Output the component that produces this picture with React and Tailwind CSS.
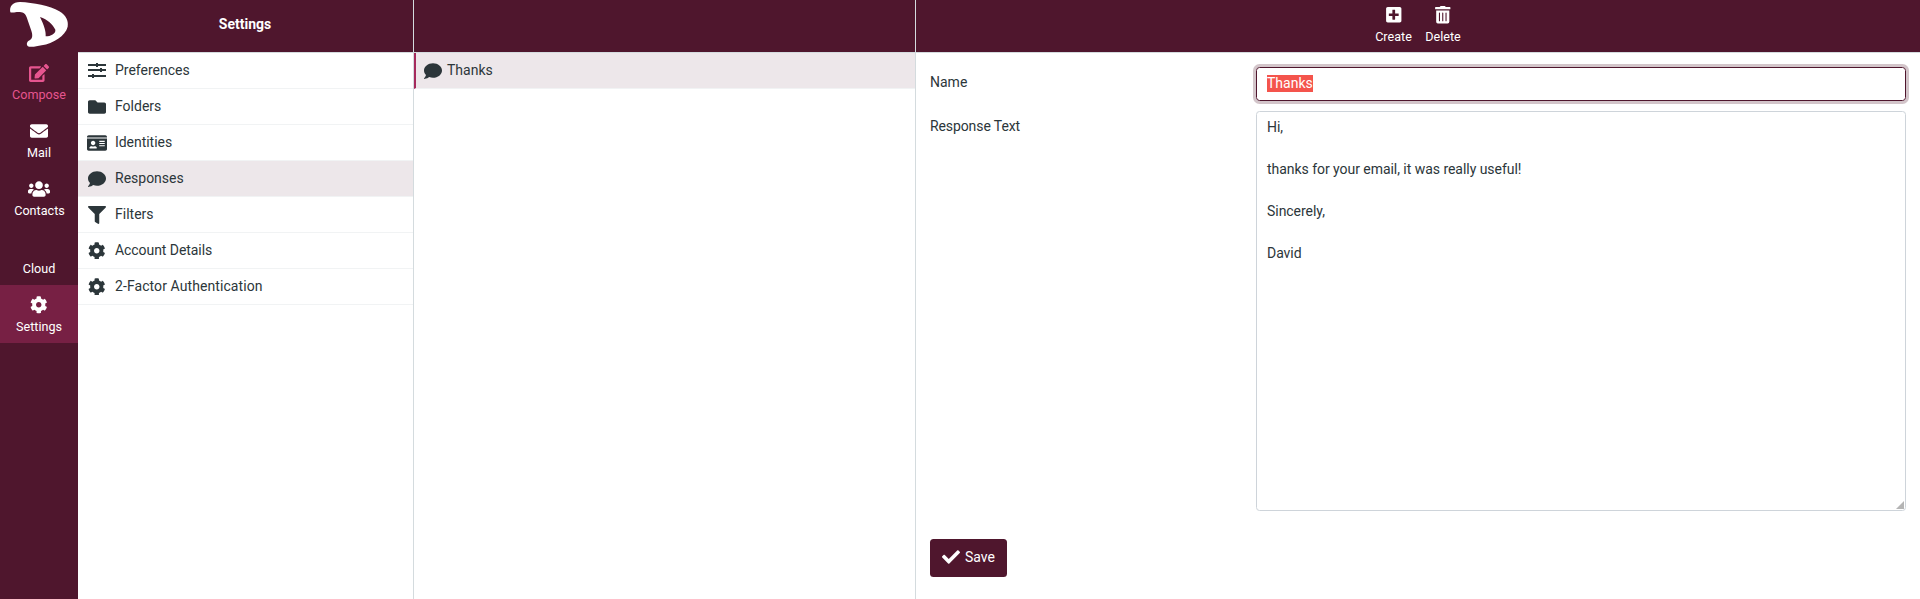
import { FaEdit, FaEnvelope, FaUsers, FaCog, FaFolder, FaIdCard, FaComment, FaFilter, FaPlusSquare, FaTrashAlt, FaCheck } from 'react-icons/fa';

function Logo() {
  return (
    <svg viewBox="0 0 234 156" className="h-[52px] w-[78px] shrink-0" fill="#fff" fillRule="evenodd">
      <path d="M31 37C27 20 38 6 60 6C100 8 150 16 178 34C198 46 206 62 203 80C196 108 160 130 125 136C108 140 90 143 83 138C78 131 81 124 91 119C98 114 98 104 94 92L80 52C76 37 64 35 50 36C42 37 36 39 31 37ZM120 51C143 58 158 73 166 89C168 101 152 109 137 109C138 94 133 78 120 51Z" />
    </svg>
  );
}

function Sliders({ className }) {
  return (
    <svg viewBox="0 0 18 18" className={className} fill="currentColor">
      <path d="M0 2h8V1h2v1h8v2h-8v1H8V4H0zM0 7h12V6h2v1h4v2h-4v1h-2V9H0zM0 13h4v-1h2v1h12v2H6v1H4v-1H0z" />
    </svg>
  );
}

const tasks = [
  { label: 'Compose', Icon: FaEdit, cls: 'text-[#e6558f]', size: 'mb-px size-[20px]' },
  { label: 'Mail', Icon: FaEnvelope, cls: 'text-white', size: 'size-[18px]' },
  { label: 'Contacts', Icon: FaUsers, cls: 'text-white', size: 'size-[22px]', offset: 'pl-px' },
  { label: 'Cloud', Icon: null, cls: 'text-white', size: '' },
  { label: 'Settings', Icon: FaCog, cls: 'bg-[#772044] text-white', size: 'size-[17.500px]' },
];

const sections = [
  { label: 'Preferences', Icon: Sliders, size: 'size-[18px]' },
  { label: 'Folders', Icon: FaFolder, size: 'size-[18px]' },
  { label: 'Identities', Icon: FaIdCard, size: 'size-[20px]', tracking: 'tracking-[-0.04px]' },
  { label: 'Responses', Icon: FaComment, size: 'size-[18px]', active: true },
  { label: 'Filters', Icon: FaFilter, size: 'size-[18px]' },
  { label: 'Account Details', Icon: FaCog, size: 'size-[17.500px]', tracking: 'tracking-[-0.06px]' },
  { label: '2-Factor Authentication', Icon: FaCog, size: 'size-[17.500px]', tracking: 'tracking-[0.08px]' },
];

export default function App() {
  return (
    <div className="flex h-[599px] w-[1920px] overflow-hidden bg-white font-['Roboto',sans-serif] text-[14px] leading-[21px] text-[#2c363a]">
      <nav className="flex w-[78px] shrink-0 flex-col bg-[#4f162d]">
        <Logo />
        <div className="mt-px flex flex-col">
          {tasks.map(({ label, Icon, cls, size, offset }) => (
            <a key={label} className={`flex h-[58px] flex-col items-center ${cls}`}>
              <span className="mt-[9px] flex h-[22px] items-center justify-center">
                {Icon && <Icon className={size} />}
              </span>
              <span className={`mt-px text-[12.600px] leading-[19px] ${offset ?? ''}`}>{label}</span>
            </a>
          ))}
        </div>
      </nav>

      <section className="flex w-[336px] shrink-0 flex-col border-r border-[#d4dbde]">
        <header className="flex h-[53px] items-center justify-center border-b border-[#d4dbde] bg-[#4f162d] pr-px pb-[3px] font-bold text-white">Settings</header>
        <ul>
          {sections.map(({ label, Icon, size, active, tracking }) => (
            <li key={label} className={`flex h-9 items-center border-b border-[#f1f3f4] pl-[9px] ${active ? 'bg-[#ede7ea]' : ''}`}>
              <span className="flex w-5 justify-center"><Icon className={size} /></span>
              <span className={`ml-2 ${tracking ?? ''}`}>{label}</span>
            </li>
          ))}
        </ul>
      </section>

      <section className="flex w-[502px] shrink-0 flex-col border-r border-[#d4dbde]">
        <header className="h-[53px] border-b border-[#d4dbde] bg-[#4f162d]" />
        <div className="flex h-9 items-center border-b border-l-2 border-b-[#f1f3f4] border-l-[#a52a5c] bg-[#ede7ea] pl-2">
          <FaComment className="size-[18px]" />
          <span className="ml-[5px]">Thanks</span>
        </div>
      </section>

      <main className="flex grow flex-col">
        <header className="flex h-[53px] justify-center border-b border-[#d4dbde] bg-[#4f162d] text-[12.600px] leading-[19px] text-white">
          <a className="flex w-[50px] flex-col items-center pt-[6px] pl-px">
            <FaPlusSquare className="size-[17.500px]" />
            <span className="mt-[3px]">Create</span>
          </a>
          <a className="flex w-[50px] flex-col items-center pt-[6px]">
            <FaTrashAlt className="size-[17.500px]" />
            <span className="mt-[3px]">Delete</span>
          </a>
        </header>
        <form className="flex flex-col px-[14px] pt-[14px]">
          <div className="flex">
            <label className="w-[326px] pt-[5px]">Name</label>
            <div className="flex h-[34px] w-[650px] items-start rounded-[3.500px] border border-[#4f162d] px-[10px] pt-[7px] shadow-[0_0_0_3px_rgba(79,22,45,0.25)]">
              <span className="h-[17px] bg-[#f4544c] leading-[17px] text-white">Thanks</span>
            </div>
          </div>
          <div className="mt-[10px] flex">
            <label className="w-[326px] pt-[5px] tracking-[-0.1px]">Response Text</label>
            <div className="relative flex">
              <textarea
                readOnly
                className="h-[400px] w-[650px] resize-none rounded-[3.500px] border border-[#ced4da] px-[10px] py-[5px] tracking-[-0.04px]"
                value={'Hi,\n\nthanks for your email, it was really useful!\n\nSincerely,\n\nDavid'}
              />
              <svg viewBox="0 0 8 8" className="absolute right-0.5 bottom-0.5 size-2" fill="#b4b4b4">
                <path d="M8 0V8H0z" />
              </svg>
            </div>
          </div>
          <button type="button" className="mt-7 flex h-[38px] w-[77px] items-center rounded-[3.500px] bg-[#4f162d] pb-0.5 pl-3 text-white">
            <FaCheck className="size-[18px]" />
            <span className="ml-[5px]">Save</span>
          </button>
        </form>
      </main>
    </div>
  );
}
